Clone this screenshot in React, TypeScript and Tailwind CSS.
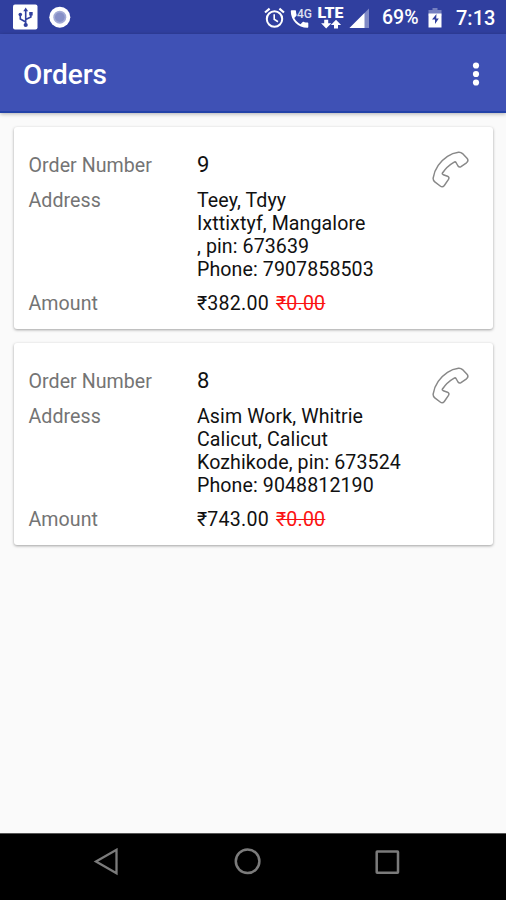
import React from "react";

const orders = [
	{
		number: "9",
		address: ["Teey, Tdyy", "Ixttixtyf, Mangalore", ", pin: 673639", "Phone: 7907858503"],
		amount: "₹382.00",
		discount: "₹0.00",
	},
	{
		number: "8",
		address: ["Asim Work, Whitrie", "Calicut, Calicut", "Kozhikode, pin: 673524", "Phone: 9048812190"],
		amount: "₹743.00",
		discount: "₹0.00",
	},
];

function StatusBar() {
	return (
		<div className="flex h-[34px] shrink-0 items-start bg-[#303f9f] text-white">
			<svg className="ml-[13px] mt-[4px]" width="25" height="26" viewBox="0 0 25 26">
				<rect x="0" y="0.5" width="24.5" height="25" rx="2" fill="#fff" />
				<path d="M12.7 6v15M12.7 18L7.3 15v-4M12.7 15.5l5.2-2.5v-3" stroke="#303f9f" strokeWidth="1.6" fill="none" />
				<g fill="#303f9f">
					<path d="M12.7 3.5l2.4 3.8h-4.8z" />
					<circle cx="12.7" cy="21" r="2.1" />
					<circle cx="7.3" cy="10.5" r="1.8" />
					<path d="M16.2 8h3.5v3.5h-3.5z" />
				</g>
			</svg>
			<svg className="ml-[11px] mt-[6px]" width="22" height="22" viewBox="0 0 22 22">
				<circle cx="10.8" cy="11.2" r="10.5" fill="#fff" />
				<circle cx="10.8" cy="11.2" r="6.5" fill="#a3abd6" />
				<circle cx="10.8" cy="11.2" r="4.8" fill="#8790c7" />
			</svg>
			<svg className="ml-[193px] mt-[7px]" width="21" height="22" viewBox="0 0 21 22" fill="none" stroke="#fff">
				<circle cx="10.5" cy="12" r="7.7" strokeWidth="2" />
				<path d="M1 5.5L5.6 1.7M20 5.5L15.4 1.7" strokeWidth="2.2" />
				<path d="M10.2 7.3v5l3.8 2.4" strokeWidth="1.6" />
			</svg>
			<svg className="ml-[5px] mt-[4px]" width="23" height="25" viewBox="0 -2 23 25" fill="#fff">
				<path d="M1.8 4.2H5c.6 0 1 .4 1 1 0 1.3.2 2.4.6 3.5.1.4 0 .8-.2 1L4.3 12c1.4 2.7 3.5 4.8 6.2 6.2l2.2-2.1c.3-.3.7-.4 1.1-.2 1.1.4 2.3.6 3.5.6.6 0 1 .4 1 1v3.2c0 .6-.4 1-1 1C8.2 21.7.8 14.3.8 5.2c0-.6.4-1 1-1z" />
				<text x="7" y="12" fontFamily="Roboto, sans-serif" fontSize="13" fontWeight="500" fillOpacity="0.85" textLength="15" lengthAdjust="spacingAndGlyphs">
					4G
				</text>
			</svg>
			<svg className="ml-[4px] mt-[1px]" width="27" height="29" viewBox="0 -5 27 29" fill="#fff">
				<text x="0.5" y="11.8" fontFamily="Roboto, sans-serif" fontWeight="900" fontSize="15.5" textLength="26" lengthAdjust="spacingAndGlyphs">
					LTE
				</text>
				<path d="M7.2 13.8h4v3.4h3.1l-5.1 5.2-5.1-5.2h3.1zM17 22.4h4V19h3.100L19 13.800 13.900 19H17z" />
			</svg>
			<svg className="ml-[5px] mt-[8px]" width="21" height="21" viewBox="0 0 21 21">
				<path d="M0.5 20L20 0.5V20z" fill="#7f89c5" />
				<path d="M0.5 20L15.5 5V20z" fill="#fff" />
			</svg>
			<span className="ml-[12px] mt-[7px] w-[37px] whitespace-nowrap text-[19.5px] font-medium leading-[22px]">69%</span>
			<svg className="ml-[9px] mt-[8px]" width="14" height="20" viewBox="0 0 14 20">
				<path d="M4.5 0h5v2h4v6h-13V2h4z" fill="#7580c0" />
				<path d="M0.5 5.5h13v14h-13z" fill="#fff" />
				<path d="M8.5 6l-4.500 5.500h3V16l3.800-5.500H8.200z" fill="#303f9f" />
			</svg>
			<span className="ml-[14px] mt-[6px] whitespace-nowrap text-[20px] font-medium leading-[24px]">7:13</span>
		</div>
	);
}

function PhoneIcon() {
	return (
		<svg className="ml-auto mt-[24px] mr-[23px] shrink-0" width="38" height="38" viewBox="0 0 38 38">
			<path
				d="M1.2 26.8C2.5 18 8.5 9.800 15.500 5.300 19 3 22.500 1.800 26.500 1.300Q28.800 1.100 30.500 2.600L35 7.300Q37 9.700 34.500 11.800L29 15.600Q27.300 16.700 26 15L24 11.500Q23.300 10.400 21.800 11.300C17.500 13.800 13.500 17.300 10.500 22Q9.800 23.200 11.300 23.700L15.500 25.300Q17.700 26.200 16.500 28.300L12.300 34.500Q10.500 36.800 8.200 35L2.800 30.800Q.8 29.200 1.200 26.800z"
				fill="none"
				stroke="#888"
				strokeWidth="1.5"
				strokeLinejoin="round"
			/>
		</svg>
	);
}

function OrderCard({ order }: { order: (typeof orders)[number] }) {
	return (
		<div className="flex h-[202px] rounded-[3px] bg-white shadow-[0_1px_3px_rgba(0,0,0,0.36)]">
			<div className="w-[183px] shrink-0 pl-[14.5px] pt-[27px] text-[19.6px] leading-[23px] tracking-[0.05px] text-[#747474]">
				<div>Order Number</div>
				<div className="mt-3">Address</div>
				<div className="mt-20">Amount</div>
			</div>
			<div className="whitespace-nowrap pt-[25px] text-[19.6px] leading-[23px] tracking-[0.09px] text-[#111]">
				<div className="h-[26px] text-[22px] leading-[26px]">{order.number}</div>
				<div className="mt-[11px]">
					{order.address.map((line) => (
						<div key={line}>{line}</div>
					))}
				</div>
				<div className="mt-[11px] flex gap-[7px] tracking-[0.22px]">
					<span>{order.amount}</span>
					<span className="text-[#fb1212] line-through">{order.discount}</span>
				</div>
			</div>
			<PhoneIcon />
		</div>
	);
}

function App() {
	return (
		<div className="flex h-[900px] w-[506px] flex-col overflow-hidden bg-[#fafafa] font-[Roboto,sans-serif]">
			<StatusBar />
			<div className="flex h-[79px] shrink-0 items-center border-b-2 border-[#2342a8] bg-[#3f51b5] pl-[23px] pr-[26px] shadow-[0_1px_4px_rgba(0,0,0,0.3)]">
				<h1 className="mt-1 text-[28px] font-medium leading-8 text-white">Orders</h1>
				<svg className="ml-auto mt-0.5" width="8" height="26" viewBox="0 0 8 26" fill="#fff">
					<circle cx="4" cy="4.5" r="3.1" />
					<circle cx="4" cy="13" r="3.1" />
					<circle cx="4" cy="21.5" r="3.1" />
				</svg>
			</div>
			<div className="flex flex-1 flex-col gap-3.5 pl-3.5 pt-3.5 pr-[13px]">
				{orders.map((order) => (
					<OrderCard key={order.number} order={order} />
				))}
			</div>
			<div className="flex h-[67px] shrink-0 items-start border-t border-[#555] bg-black pt-3.5">
				<svg className="ml-[93px]" width="26" height="28" viewBox="0 0 26 28" fill="none" stroke="#7b7b7b" strokeWidth="2.3">
					<path d="M3 13.5L23.5 1.8v23.4z" />
				</svg>
				<svg className="ml-[115px]" width="28" height="28" viewBox="0 0 28 28" fill="none" stroke="#7b7b7b" strokeWidth="2.5">
					<circle cx="13.6" cy="13.2" r="11.8" />
				</svg>
				<svg className="ml-[112px]" width="28" height="28" viewBox="0 0 28 28" fill="none" stroke="#7b7b7b" strokeWidth="2.5">
					<rect x="2.7" y="3.5" width="21.3" height="21.3" rx="0.5" />
				</svg>
			</div>
		</div>
	);
}

export default App;
